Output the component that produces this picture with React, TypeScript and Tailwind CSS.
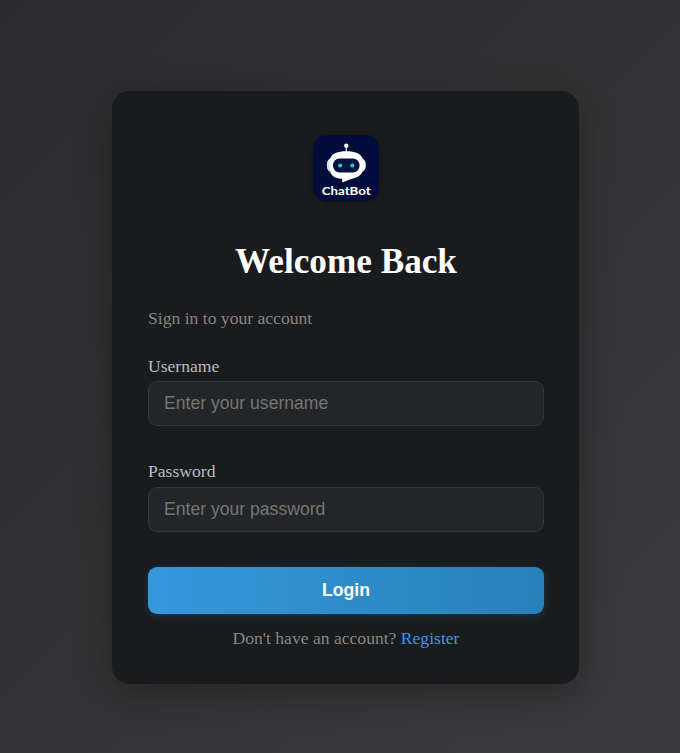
function Logo() {
  return (
    <svg
      className="h-[66px] w-[66px] rounded-[13px] shadow-[0_2px_9px_rgba(0,0,0,0.2)]"
      viewBox="0 0 66 66"
      role="img"
      aria-label="ChatBot"
    >
      <rect width="66" height="66" fill="#020d3d" />
      <circle cx="33.3" cy="10.8" r="2.2" fill="#fff" />
      <path d="M33.3 11v7" stroke="#dfe6f3" strokeWidth="1.2" />
      <path
        d="M33.300 16.300C42 16.300 47.800 18.500 49.800 23.800C51.900 25 52.800 27 52.800 30.200S51.700 35.700 49.500 36.800C47.500 41 43.500 43 39.500 43.700C35.500 44.600 33 45.900 29.200 47.600V43.900C23 43.500 18.700 41.500 17.200 36.800C15 35.700 13.900 33.400 13.900 30.200S15 25 17 23.800C18.900 18.500 24.600 16.300 33.300 16.300Z"
        fill="#fff"
      />
      <path d="M17 23.800C15 25 13.900 27 13.900 30.200S15 35.700 17.200 36.800C16.200 32.500 16.200 28 17 23.800Z" fill="#d5e2f1" />
      <rect x="20" y="23.500" width="26.500" height="14" rx="6.500" fill="#03123f" />
      <circle cx="27.200" cy="30.500" r="2" fill="#20cfe0" />
      <circle cx="39.300" cy="30.500" r="2" fill="#20cfe0" />
      <text
        x="33.200"
        y="59.600"
        textAnchor="middle"
        textLength="49"
        lengthAdjust="spacingAndGlyphs"
        className="font-['Lato',sans-serif] text-[12px] font-bold"
        fill="#fff"
      >
        ChatBot
      </text>
    </svg>
  );
}

export default function App() {
  const inputClass =
    "h-[45px] w-full rounded-[9px] border border-[#343537] bg-[#242527] px-[15px] font-['Liberation_Sans',Arial,sans-serif] text-[17.600px] text-white outline-none placeholder:text-[#757575]";

  return (
    <main className="flex h-[753px] justify-center bg-linear-[135deg,#2c2c2e,#3a3a3c] pt-[91px] pl-[11px] font-['Liberation_Serif','Times_New_Roman',serif]">
      <section className="h-[593px] w-[467px] rounded-[18px] bg-[#1a1b1d] pt-11 pr-[35px] pl-9 shadow-[0_9px_36px_rgba(0,0,0,0.3)]">
        <div className="flex justify-center">
          <Logo />
        </div>
        <h1 className="mt-[41px] text-center text-[35.200px] leading-[40px] font-bold text-white">Welcome Back</h1>
        <p className="mt-[26px] text-[17.600px] leading-[20px] text-[#868686]">Sign in to your account</p>
        <form className="mt-[28px]" onSubmit={(event) => event.preventDefault()}>
          <div className="flex flex-col gap-[35px]">
            <div className="flex flex-col">
              <label htmlFor="username" className="h-[25px] text-[17.600px] leading-[20px] text-[#b8bbc0]">
                Username
              </label>
              <input id="username" type="text" placeholder="Enter your username" className={inputClass} />
            </div>
            <div className="flex flex-col">
              <label htmlFor="password" className="h-[26px] text-[17.600px] leading-[20px] text-[#b8bbc0]">
                Password
              </label>
              <input id="password" type="password" placeholder="Enter your password" className={inputClass} />
            </div>
          </div>
          <button
            type="submit"
            className="mt-[35px] h-[47px] w-full rounded-[9px] bg-linear-[90deg,#3498db,#2980b9] font-['Liberation_Sans',Arial,sans-serif] text-[17.600px] font-bold text-white shadow-[0_2px_9px_rgba(52,152,219,0.2)]"
          >
            Login
          </button>
        </form>
        <p className="mt-[14px] text-center text-[17.600px] leading-[20px] text-[#868686]">
          Don't have an account? <a href="#" className="text-[#3498ef]">Register</a>
        </p>
      </section>
    </main>
  );
}
